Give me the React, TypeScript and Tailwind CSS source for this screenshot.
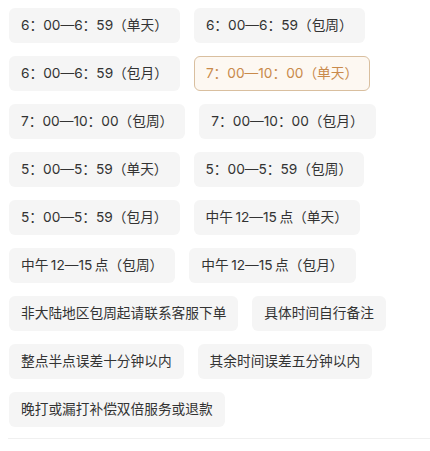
import { useState } from "react";

// 打卡时段选项（中午档数字两侧留细空格）
const OPTIONS = [
  "6：00—6：59（单天）",
  "6：00—6：59（包周）",
  "6：00—6：59（包月）",
  "7：00—10：00（单天）",
  "7：00—10：00（包周）",
  "7：00—10：00（包月）",
  "5：00—5：59（单天）",
  "5：00—5：59（包周）",
  "5：00—5：59（包月）",
  "中午\u200912—15\u2009点（单天）",
  "中午\u200912—15\u2009点（包周）",
  "中午\u200912—15\u2009点（包月）",
  "非大陆地区包周起请联系客服下单",
  "具体时间自行备注",
  "整点半点误差十分钟以内",
  "其余时间误差五分钟以内",
  "晚打或漏打补偿双倍服务或退款",
];

export default function App() {
  const [selected, setSelected] = useState(3);

  return (
    <div className="w-[430px] h-[451px] bg-white overflow-hidden font-['Inter','Noto_Sans_CJK_SC',sans-serif]">
      <div className="flex flex-wrap gap-x-[14px] gap-y-[13px] pl-[9px] pr-2 pt-[8px]">
        {OPTIONS.map((label, i) => {
          const active = i === selected;
          return (
            <button
              key={label}
              type="button"
              onClick={() => setSelected(i)}
              className={
                active
                  ? "h-[35px] px-[11px] rounded-md border border-[#d9bf9f] bg-[#fdf8f2] text-[13.7px] text-[#c98a4b] whitespace-nowrap"
                  : "h-[35px] px-[11px] rounded-md border border-transparent bg-[#f5f5f5] text-[13.7px] text-[#333333] whitespace-nowrap"
              }
            >
              {label}
            </button>
          );
        })}
      </div>
      {/* 底部分隔线 */}
      <div className="mt-[11px] ml-2 h-px bg-[#f0f0f0]" />
    </div>
  );
}
